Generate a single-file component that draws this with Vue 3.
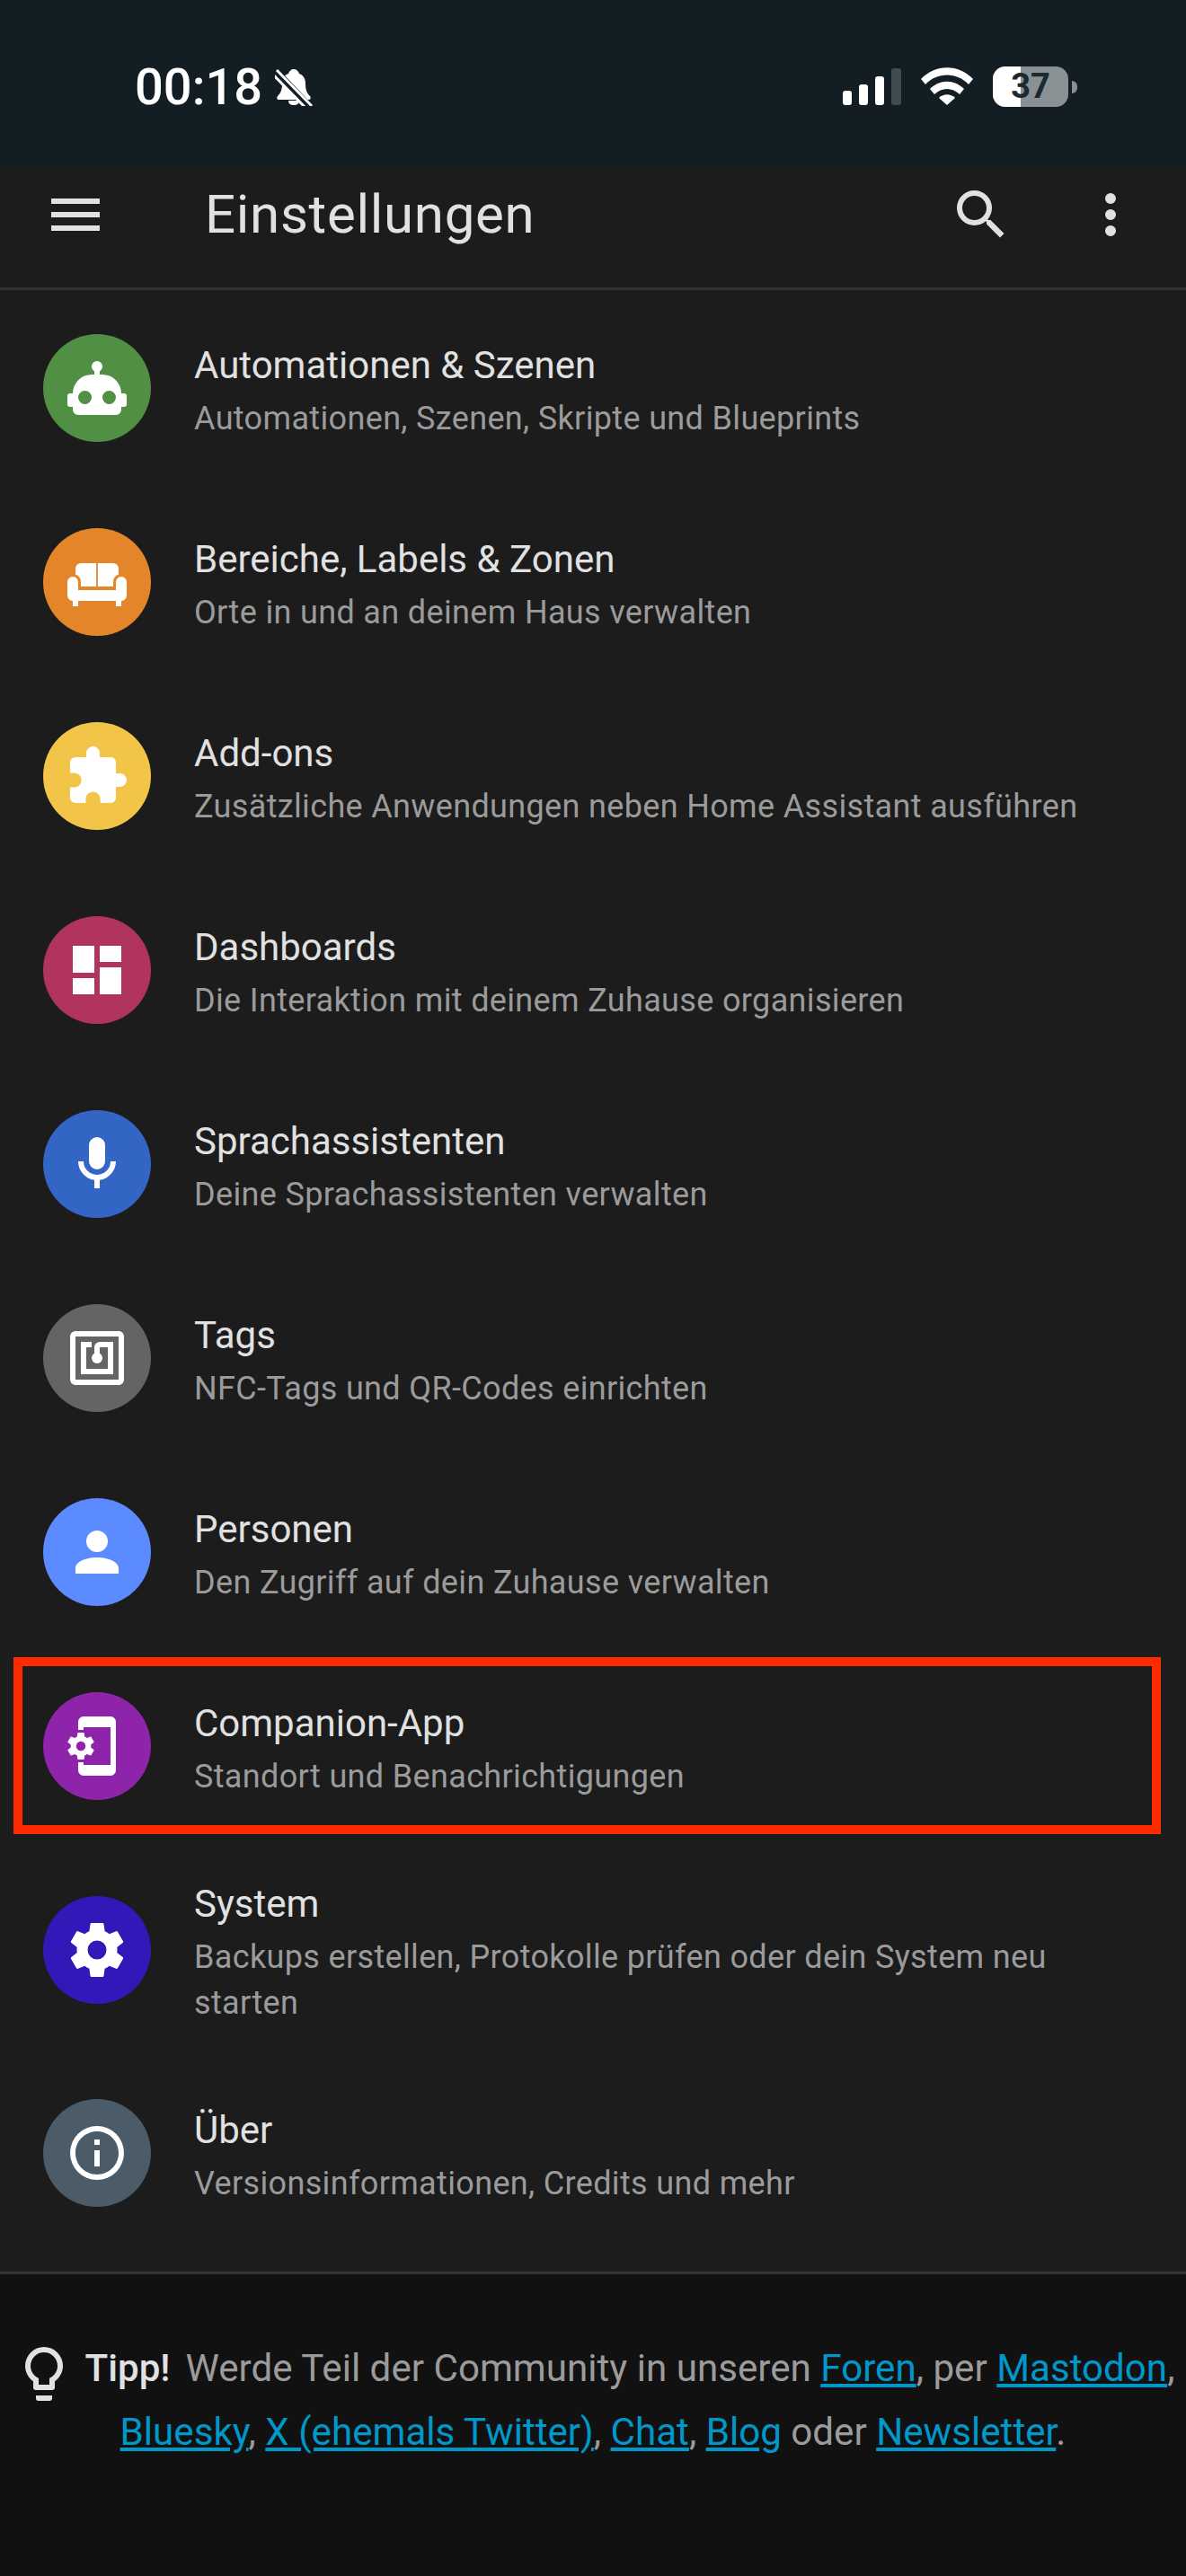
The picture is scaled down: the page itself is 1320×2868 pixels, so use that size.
<template>
  <div class="page">
    <div class="status-bar">
      <div class="status-left">
        <span class="time">00:18</span>
        <svg class="bell" viewBox="0 0 42 42" width="42" height="42">
          <path fill="#fff" d="M21 1c3 0 5 2 6 5 5 2 7 6 7 11 0 6 1 10 5 14 1 1 1 4-1 4H4c-2 0-2-3-1-4 4-4 5-8 5-14 0-5 2-9 7-11 1-3 3-5 6-5z" />
          <path fill="#fff" d="M15 36h12c0 3-2 5-6 5s-6-2-6-5z" />
          <path d="M-1 2L39 44" stroke="#121e24" stroke-width="9" />
          <path d="M2 2L41 42" stroke="#fff" stroke-width="3" />
          <path d="M-2 7L34 44" stroke="#fff" stroke-width="3" />
        </svg>
      </div>
      <div class="status-right">
        <svg class="signal" viewBox="0 0 65 41" width="65" height="41">
          <rect x="0" y="25" width="10" height="16" rx="3" fill="#fff" />
          <rect x="18" y="18" width="10" height="23" rx="3" fill="#fff" />
          <rect x="36" y="9" width="10" height="32" rx="3" fill="#fff" />
          <rect x="54" y="0" width="11" height="41" rx="3" fill="#3f4c52" />
        </svg>
        <svg class="wifi" viewBox="0 0 58 42" width="58" height="42">
          <path fill="#fff" d="M0 13C16-4 42-4 58 13l-5 6C40 5 18 5 5 19z" />
          <path fill="#fff" d="M10 24c11-11 27-11 38 0l-5 6c-8-8-20-8-28 0z" />
          <path fill="#fff" d="M20 34c5-5 13-5 18 0l-9 8z" />
        </svg>
        <div class="battery-wrap">
          <div class="battery">
            <div class="battery-fill"></div>
            <span class="battery-num">37</span>
          </div>
          <div class="battery-nub"></div>
        </div>
      </div>
    </div>

    <header class="toolbar">
      <svg class="icon" viewBox="0 0 24 24"><path :d="icons.menu" /></svg>
      <div class="toolbar-title">Einstellungen</div>
      <svg class="icon" viewBox="0 0 24 24"><path :d="icons.search" /></svg>
      <svg class="icon dots" viewBox="0 0 24 24"><path :d="icons.dots" /></svg>
    </header>

    <main class="list">
      <div v-for="item in items" :key="item.title" class="row" :class="{ tall: item.tall }">
        <div class="badge" :style="{ background: item.color }">
          <svg class="badge-icon" viewBox="0 0 24 24">
            <path v-for="d in item.paths" :key="d" :d="d" />
            <path v-if="item.cog" :d="icons.cog" transform="translate(0 6) scale(.5)" />
          </svg>
        </div>
        <div class="row-text">
          <div class="row-title">{{ item.title }}</div>
          <div class="row-sub">{{ item.sub }}</div>
        </div>
        <div v-if="item.marked" class="marker"></div>
      </div>
    </main>

    <footer class="tips">
      <svg class="bulb" viewBox="0 0 24 24"><path :d="icons.bulb" /></svg>
      <strong>Tipp!</strong>
      <span>Werde Teil der Community in unseren
        <a href="#">Foren</a>, per <a href="#">Mastodon</a>,
        <a href="#">Bluesky</a>, <a href="#">X (ehemals Twitter)</a>,
        <a href="#">Chat</a>, <a href="#">Blog</a> oder <a href="#">Newsletter</a>.</span>
    </footer>
  </div>
</template>

<script setup>
const icons = {
  menu: "M3,6H21V8H3V6M3,11H21V13H3V11M3,16H21V18H3V16Z",
  search:
    "M9.5,3A6.5,6.5 0 0,1 16,9.5C16,11.11 15.41,12.59 14.44,13.73L14.71,14H15.5L20.5,19L19,20.5L14,15.5V14.71L13.73,14.44C12.59,15.41 11.11,16 9.5,16A6.5,6.5 0 0,1 3,9.5A6.5,6.5 0 0,1 9.5,3M9.5,5C7,5 5,7 5,9.5C5,12 7,14 9.5,14C12,14 14,12 14,9.5C14,7 12,5 9.5,5Z",
  dots: "M12,16A2,2 0 0,1 14,18A2,2 0 0,1 12,20A2,2 0 0,1 10,18A2,2 0 0,1 12,16M12,10A2,2 0 0,1 14,12A2,2 0 0,1 12,14A2,2 0 0,1 10,12A2,2 0 0,1 12,10M12,4A2,2 0 0,1 14,6A2,2 0 0,1 12,8A2,2 0 0,1 10,6A2,2 0 0,1 12,4Z",
  bulb: "M12,2A7,7 0 0,1 19,9C19,11.38 17.81,13.47 16,14.74V17A1,1 0 0,1 15,18H9A1,1 0 0,1 8,17V14.74C6.19,13.47 5,11.38 5,9A7,7 0 0,1 12,2M9,21V20H15V21A1,1 0 0,1 14,22H10A1,1 0 0,1 9,21M12,4A5,5 0 0,0 7,9C7,11.05 8.23,12.81 10,13.58V16H14V13.58C15.77,12.81 17,11.05 17,9A5,5 0 0,0 12,4Z",
  cog: "M12,15.5A3.5,3.5 0 0,1 8.5,12A3.5,3.5 0 0,1 12,8.5A3.5,3.5 0 0,1 15.5,12A3.5,3.5 0 0,1 12,15.5M19.43,12.97C19.47,12.65 19.5,12.33 19.5,12C19.5,11.67 19.47,11.34 19.43,11L21.54,9.37C21.73,9.22 21.78,8.95 21.66,8.73L19.66,5.27C19.54,5.05 19.27,4.96 19.05,5.05L16.56,6.05C16.04,5.66 15.5,5.32 14.87,5.07L14.5,2.42C14.46,2.18 14.25,2 14,2H10C9.75,2 9.54,2.18 9.5,2.42L9.13,5.07C8.5,5.32 7.96,5.66 7.44,6.05L4.95,5.05C4.73,4.96 4.46,5.05 4.34,5.27L2.34,8.73C2.21,8.95 2.27,9.22 2.46,9.37L4.57,11C4.53,11.34 4.5,11.67 4.5,12C4.5,12.33 4.53,12.65 4.57,12.97L2.46,14.63C2.27,14.78 2.21,15.05 2.34,15.27L4.34,18.73C4.46,18.95 4.73,19.03 4.95,18.95L7.44,17.94C7.96,18.34 8.5,18.68 9.13,18.93L9.5,21.58C9.54,21.82 9.75,22 10,22H14C14.25,22 14.46,21.82 14.5,21.58L14.87,18.93C15.5,18.67 16.04,18.34 16.56,17.94L19.05,18.95C19.27,19.03 19.54,18.95 19.66,18.73L21.66,15.27C21.78,15.05 21.73,14.78 21.54,14.63L19.43,12.97Z",
};

const items = [
  {
    title: "Automationen & Szenen",
    sub: "Automationen, Szenen, Skripte und Blueprints",
    color: "#518f45",
    paths: [
      "M12,2A2,2 0 0,1 14,4C14,4.74 13.6,5.39 13,5.73V7H14A7,7 0 0,1 21,14H22A1,1 0 0,1 23,15V18A1,1 0 0,1 22,19H21V20A2,2 0 0,1 19,22H5A2,2 0 0,1 3,20V19H2A1,1 0 0,1 1,18V15A1,1 0 0,1 2,14H3A7,7 0 0,1 10,7H11V5.73C10.4,5.39 10,4.74 10,4A2,2 0 0,1 12,2M7.5,13A2.5,2.5 0 0,0 5,15.5A2.5,2.5 0 0,0 7.5,18A2.5,2.5 0 0,0 10,15.5A2.5,2.5 0 0,0 7.5,13M16.5,13A2.5,2.5 0 0,0 14,15.5A2.5,2.5 0 0,0 16.5,18A2.5,2.5 0 0,0 19,15.5A2.5,2.5 0 0,0 16.5,13Z",
    ],
  },
  {
    title: "Bereiche, Labels & Zonen",
    sub: "Orte in und an deinem Haus verwalten",
    color: "#e5852a",
    paths: [
      "M3 10a2 2 0 0 1 2 2v3h14v-3a2 2 0 0 1 4 0v5a2 2 0 0 1-2 2v2h-2v-2H5v2H3v-2a2 2 0 0 1-2-2v-5a2 2 0 0 1 2-2z",
      "M6 5h5.7v8.7H6V12a3 3 0 0 0-2-2.8V7a2 2 0 0 1 2-2z",
      "M18 5h-5.7v8.7H18V12a3 3 0 0 1 2-2.8V7a2 2 0 0 0-2-2z",
    ],
  },
  {
    title: "Add-ons",
    sub: "Zusätzliche Anwendungen neben Home Assistant ausführen",
    color: "#f2c548",
    paths: [
      "M20.5,11H19V7C19,5.89 18.1,5 17,5H13V3.5A2.5,2.5 0 0,0 10.5,1A2.5,2.5 0 0,0 8,3.5V5H4A2,2 0 0,0 2,7V10.8H3.5C5,10.8 6.2,12 6.2,13.5C6.2,15 5,16.2 3.5,16.2H2V20A2,2 0 0,0 4,22H7.8V20.5C7.8,19 9,17.8 10.5,17.8C12,17.8 13.2,19 13.2,20.5V22H17A2,2 0 0,0 19,20V16H20.5A2.5,2.5 0 0,0 23,13.5A2.5,2.5 0 0,0 20.5,11Z",
    ],
  },
  {
    title: "Dashboards",
    sub: "Die Interaktion mit deinem Zuhause organisieren",
    color: "#b0345c",
    paths: ["M13,3V9H21V3M13,21H21V11H13M3,21H11V15H3M3,13H11V3H3V13Z"],
  },
  {
    title: "Sprachassistenten",
    sub: "Deine Sprachassistenten verwalten",
    color: "#3366c4",
    paths: [
      "M12,2A3,3 0 0,1 15,5V11A3,3 0 0,1 12,14A3,3 0 0,1 9,11V5A3,3 0 0,1 12,2M19,11C19,14.53 16.39,17.44 13,17.93V21H11V17.93C7.61,17.44 5,14.53 5,11H7A5,5 0 0,0 12,16A5,5 0 0,0 17,11H19Z",
    ],
  },
  {
    title: "Tags",
    sub: "NFC-Tags und QR-Codes einrichten",
    color: "#646464",
    paths: [
      "M18,6H13A2,2 0 0,0 11,8V10.28C10.41,10.62 10,11.26 10,12A2,2 0 0,0 12,14C13.11,14 14,13.1 14,12C14,11.26 13.6,10.62 13,10.28V8H16V16H8V8H10V6H8L6,6V18H18M20,20H4V4H20M20,2H4A2,2 0 0,0 2,4V20A2,2 0 0,0 4,22H20C21.11,22 22,21.1 22,20V4C22,2.89 21.11,2 20,2Z",
    ],
  },
  {
    title: "Personen",
    sub: "Den Zugriff auf dein Zuhause verwalten",
    color: "#5c8aff",
    paths: [
      "M12,4A4,4 0 0,1 16,8A4,4 0 0,1 12,12A4,4 0 0,1 8,8A4,4 0 0,1 12,4M12,14C16.42,14 20,15.79 20,18V20H4V18C4,15.79 7.58,14 12,14Z",
    ],
  },
  {
    title: "Companion-App",
    sub: "Standort und Benachrichtigungen",
    color: "#8e24aa",
    marked: true,
    cog: true,
    paths: ["M7 1h10a2 2 0 0 1 2 2v18a2 2 0 0 1-2 2H7a2 2 0 0 1-2-2v-3h2v1h10V5H7v1H5V3a2 2 0 0 1 2-2z"],
  },
  {
    title: "System",
    sub: "Backups erstellen, Protokolle prüfen oder dein System neu starten",
    color: "#3118b8",
    tall: true,
    paths: [icons.cog],
  },
  {
    title: "Über",
    sub: "Versionsinformationen, Credits und mehr",
    color: "#4b5b67",
    paths: [
      "M11,9H13V7H11M12,20C7.59,20 4,16.41 4,12C4,7.59 7.59,4 12,4C16.41,4 20,7.59 20,12C20,16.41 16.41,20 12,20M12,2A10,10 0 0,0 2,12A10,10 0 0,0 12,22A10,10 0 0,0 22,12A10,10 0 0,0 12,2M11,17H13V11H11V17Z",
    ],
  },
];
</script>

<style>
html,
body {
  background: #111111;
}
</style>

<style scoped>
.page {
  width: 1320px;
  min-height: 2868px;
  background: #111111;
  font-family: Roboto, "Liberation Sans", sans-serif;
}

.status-bar {
  height: 186px;
  box-sizing: border-box;
  padding: 74px 121px 0 150px;
  background: #121e24;
  display: flex;
  justify-content: space-between;
  align-items: flex-start;
}
.status-left {
  display: flex;
  align-items: center;
  gap: 14px;
  height: 46px;
}
.time {
  color: #fff;
  font-size: 56px;
  font-weight: 500;
  line-height: 46px;
}
.status-right {
  display: flex;
  align-items: flex-end;
  gap: 22px;
  height: 45px;
}
.signal,
.wifi {
  display: block;
  margin-bottom: 2px;
}
.battery-wrap {
  display: flex;
  align-items: center;
  gap: 4px;
  height: 45px;
}
.battery {
  position: relative;
  width: 84px;
  height: 45px;
  border-radius: 14px;
  background: #899194;
  overflow: hidden;
}
.battery-fill {
  width: 31px;
  height: 100%;
  background: #fff;
}
.battery-num {
  position: absolute;
  left: 0;
  right: 0;
  top: 0;
  line-height: 45px;
  text-align: center;
  color: #1c2930;
  font-size: 38px;
  font-weight: 700;
}
.battery-nub {
  width: 6px;
  height: 14px;
  background: #899194;
  border-radius: 0 6px 6px 0;
}

.toolbar {
  height: 137px;
  box-sizing: border-box;
  padding: 17px 48px 0;
  background: #1c1c1c;
  border-bottom: 3px solid #333333;
  display: flex;
  align-items: flex-start;
}
.icon {
  width: 72px;
  height: 72px;
  fill: #e1e1e1;
  flex: none;
}
.dots {
  margin-left: 72px;
}
.toolbar-title {
  flex: 1;
  margin-left: 108px;
  color: #e1e1e1;
  font-size: 60px;
  letter-spacing: 0.7px;
  line-height: 72px;
}

.list {
  background: #1c1c1c;
  padding-top: 1px;
  padding-bottom: 24px;
  border-bottom: 3px solid #333333;
}
.row {
  position: relative;
  height: 216px;
  display: flex;
  align-items: center;
  padding-left: 48px;
  gap: 48px;
  box-sizing: border-box;
}
.row.tall {
  height: 237px;
}
.badge {
  width: 120px;
  height: 120px;
  border-radius: 50%;
  flex: none;
  display: flex;
  align-items: center;
  justify-content: center;
}
.badge-icon {
  width: 72px;
  height: 72px;
  fill: #fff;
}
.row-text {
  width: 1050px;
  padding-top: 4px;
}
.row-title {
  color: #e1e1e1;
  font-size: 42px;
  line-height: 60px;
}
.row-sub {
  color: #9b9b9b;
  font-size: 36px;
  letter-spacing: 0.35px;
  line-height: 51px;
  margin-top: 4px;
}
.marker {
  position: absolute;
  left: 15px;
  right: 28px;
  top: 9px;
  bottom: 10px;
  border: 10px solid #ff2a00;
}

.tips {
  padding: 70px 0 0;
  text-align: center;
  color: #9b9b9b;
  font-size: 42.15px;
  line-height: 70px;
}
.tips strong {
  color: #e1e1e1;
  font-weight: 500;
  margin-right: 17px;
}
.tips a {
  color: #0097c9;
  text-decoration: underline;
}
.bulb {
  width: 72px;
  height: 72px;
  fill: #e1e1e1;
  vertical-align: middle;
  margin: 0 10px -6px 0;
}
</style>
